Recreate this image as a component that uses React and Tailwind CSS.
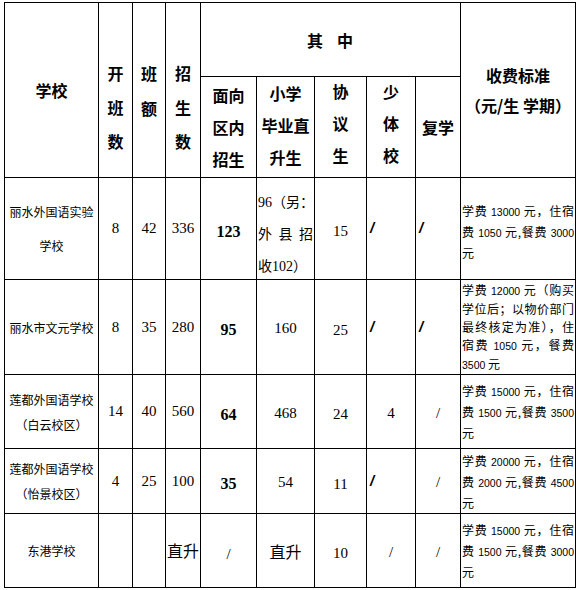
// 招生计划表
const cjk = '"Noto Sans CJK SC", sans-serif'

// wrap digit runs so numbers come out smaller, like the original sheet
const fmt = (text) =>
  text.split(/(\d+)/).map((part, i) =>
    /^\d+$/.test(part) ? (
      <span key={i} className="font-['Liberation_Sans',sans-serif] text-[10.5px]">
        {part}
      </span>
    ) : (
      <span key={i}>{part}</span>
    )
  )

// each line on its own, spread to full width except the last one
const Justified = ({ lines, className = '', digits = false }) => (
  <div className={className}>
    {lines.map((line, i) => (
      <div
        key={i}
        className={
          i < lines.length - 1
            ? 'text-justify [text-align-last:justify] whitespace-nowrap'
            : 'text-left whitespace-nowrap'
        }
      >
        {digits ? fmt(line) : line}
      </div>
    ))}
  </div>
)

const Stack = ({ lines }) => (
  <>
    {lines.map((l, i) => (
      <div key={i}>{l}</div>
    ))}
  </>
)

const td = 'border border-black px-[1px] align-middle text-center'
const num = 'font-["Liberation_Serif",serif] text-[15px]'
const bold = 'font-["Liberation_Serif",serif] text-[16px] font-bold'
const thinSlash = 'font-["Liberation_Serif",serif] text-[15px]'

const BoldSlash = () => (
  <div className="text-left pl-[2px] font-['Liberation_Sans',sans-serif] text-[15px] font-bold italic">
    /
  </div>
)

const rows = [
  {
    h: 'h-[102px]',
    school: ['丽水外国语实验', '学校'],
    schoolLh: 'leading-[34px]',
    open: '8',
    size: '42',
    total: '336',
    local: '123',
    direct: (
      <Justified
        className="translate-y-[6px] leading-[32px] text-[14px] font-['Liberation_Serif','Noto_Sans_CJK_SC',serif]"
        lines={['96（另：', '外县招', '收102）']}
      />
    ),
    agree: '15',
    sport: <BoldSlash />,
    repeat: <BoldSlash />,
    fee: ['学费 13000 元，住宿', '费 1050 元,餐费 3000', '元'],
    feeLh: 'leading-[19px] translate-y-[3px]',
  },
  {
    h: 'h-[95px]',
    school: ['丽水市文元学校'],
    schoolLh: 'leading-[25px]',
    open: '8',
    size: '35',
    total: '280',
    local: '95',
    direct: <span className={num}>160</span>,
    agree: '25',
    sport: <BoldSlash />,
    repeat: <BoldSlash />,
    fee: [
      '学费 12000 元（购买',
      '学位后；以物价部门',
      '最终核定为准），住',
      '宿费 1050 元，餐费',
      '3500 元',
    ],
    feeLh: 'leading-[18px]',
  },
  {
    h: 'h-[74px]',
    school: ['莲都外国语学校', '（白云校区）'],
    schoolLh: 'leading-[25px]',
    open: '14',
    size: '40',
    total: '560',
    local: '64',
    direct: <span className={num}>468</span>,
    agree: '24',
    sport: <span className={num}>4</span>,
    repeat: <span className={thinSlash}>/</span>,
    fee: ['学费 15000 元，住宿', '费 1500 元,餐费 3500', '元'],
    feeLh: 'leading-[19px]',
  },
  {
    h: 'h-[65px]',
    school: ['莲都外国语学校', '（怡景校区）'],
    schoolLh: 'leading-[25px]',
    open: '4',
    size: '25',
    total: '100',
    local: '35',
    direct: <span className={num}>54</span>,
    agree: '11',
    sport: <BoldSlash />,
    repeat: <span className={thinSlash}>/</span>,
    fee: ['学费 20000 元，住宿', '费 2000 元,餐费 4500', '元'],
    feeLh: 'leading-[19px]',
  },
  {
    h: 'h-[74px]',
    school: ['东港学校'],
    schoolLh: 'leading-[25px]',
    open: '',
    size: '',
    total: <span className="font-['Noto_Sans_CJK_SC',sans-serif] text-[16px]">直升</span>,
    local: <span className={thinSlash + ' font-normal'}>/</span>,
    direct: <span className="font-['Noto_Sans_CJK_SC',sans-serif] text-[16px]">直升</span>,
    agree: '10',
    sport: <span className={thinSlash}>/</span>,
    repeat: <span className={thinSlash}>/</span>,
    fee: ['学费 15000 元，住宿', '费 1500 元,餐费 3000', '元'],
    feeLh: 'leading-[19px]',
  },
]

export default function App() {
  return (
    <div className="min-h-[590px] w-[579px] bg-white pt-[2px] pl-[4px] text-black" style={{ fontFamily: cjk }}>
      <table className="w-[571px] table-fixed border-collapse">
        <colgroup>
          <col className="w-[94px]" />
          <col className="w-[34px]" />
          <col className="w-[33px]" />
          <col className="w-[35px]" />
          <col className="w-[56px]" />
          <col className="w-[58px]" />
          <col className="w-[52px]" />
          <col className="w-[49px]" />
          <col className="w-[45px]" />
          <col className="w-[115px]" />
        </colgroup>
        <thead className="text-[16px] font-bold">
          <tr className="h-[74px]">
            <th rowSpan={2} className={td}>
              学校
            </th>
            <th rowSpan={2} className={td + ' align-top pt-[53px] leading-[34px]'}>
              <Stack lines={['开', '班', '数']} />
            </th>
            <th rowSpan={2} className={td + ' align-top pt-[53px] leading-[35px]'}>
              <Stack lines={['班', '额']} />
            </th>
            <th rowSpan={2} className={td + ' align-top pt-[53px] leading-[34px]'}>
              <Stack lines={['招', '生', '数']} />
            </th>
            <th colSpan={5} className={td + ' tracking-[14px] pl-[14px]'}>
              其中
            </th>
            <th rowSpan={2} className={td + ' leading-[30px]'}>
              <Stack lines={['收费标准', '（元/生 学期）']} />
            </th>
          </tr>
          <tr className="h-[101px] leading-[32px]">
            <th className={td}>
              <Stack lines={['面向', '区内', '招生']} />
            </th>
            <th className={td}>
              <div className="-translate-y-[2px]">
                <Stack lines={['小学', '毕业直', '升生']} />
              </div>
            </th>
            <th className={td}>
              <div className="-translate-y-[4px]">
                <Stack lines={['协', '议', '生']} />
              </div>
            </th>
            <th className={td}>
              <div className="-translate-y-[4px]">
                <Stack lines={['少', '体', '校']} />
              </div>
            </th>
            <th className={td}>复学</th>
          </tr>
        </thead>
        <tbody>
          {rows.map((r, i) => (
            <tr key={i} className={r.h}>
              <td className={td + ' text-[12px] ' + r.schoolLh}>
                <Stack lines={r.school} />
              </td>
              <td className={td + ' ' + num}>{r.open}</td>
              <td className={td + ' ' + num}>{r.size}</td>
              <td className={td + ' ' + num}>{r.total}</td>
              <td className={td + ' pt-[6px] ' + bold}>{r.local}</td>
              <td className={td}>{r.direct}</td>
              <td className={td + ' pt-[6px] ' + num}>{r.agree}</td>
              <td className={td}>{r.sport}</td>
              <td className={td}>{r.repeat}</td>
              <td className={td + ' text-left px-[1px]'}>
                <Justified
                  digits
                  className={"text-[12px] font-['Noto_Sans_CJK_SC',sans-serif] " + r.feeLh}
                  lines={r.fee}
                />
              </td>
            </tr>
          ))}
        </tbody>
      </table>
    </div>
  )
}
